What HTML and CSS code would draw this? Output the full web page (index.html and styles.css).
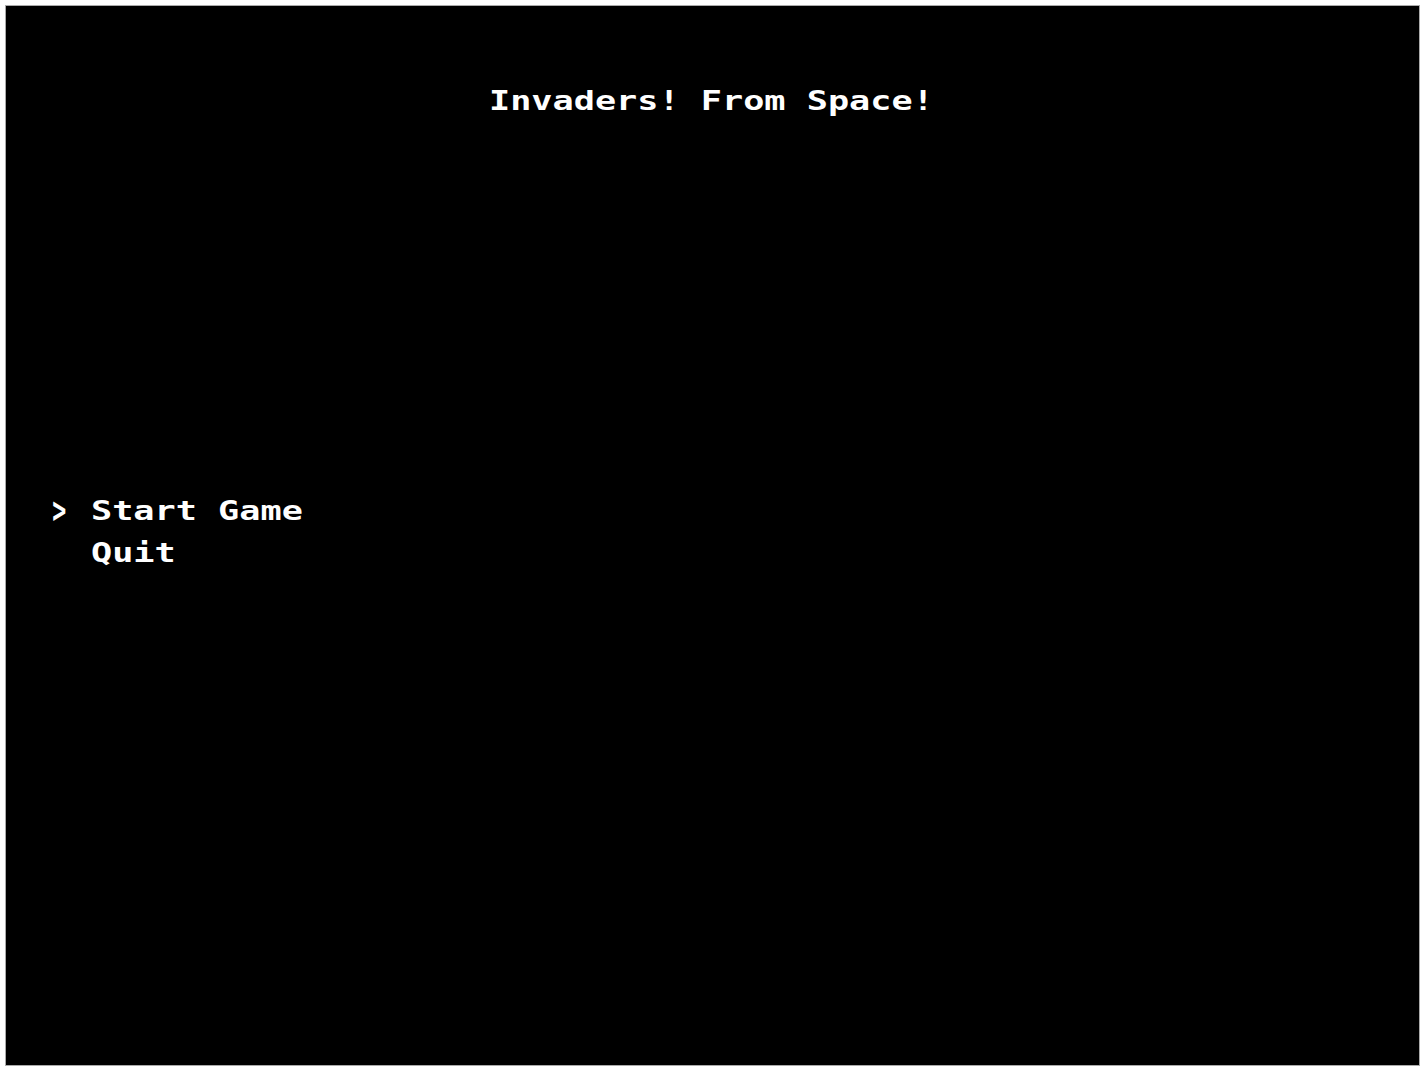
FILE: index.html
```html
<!DOCTYPE html>
<html lang="en">
<head>
<meta charset="utf-8">
<title>Invaders! From Space!</title>
<link rel="stylesheet" href="styles.css">
</head>
<body>
<main class="screen">
  <h1 class="title"><span class="wide">Invaders! From Space!</span></h1>
  <ul class="menu">
    <li class="item"><span class="cursor"><span class="arrow">&gt;</span></span><span class="wide">Start Game</span></li>
    <li class="item"><span class="cursor"></span><span class="wide">Quit</span></li>
  </ul>
</main>
</body>
</html>
```

FILE: styles.css
```css
* { box-sizing: border-box; }
body {
  margin: 0;
  padding: 5px;
  height: 1071px;
  background: #fff;
  overflow: hidden;
}
.screen {
  width: 1415px;
  height: 1061px;
  background: #000;
  border: 1px solid #aaa;
  color: #fff;
  font: bold 27px/42px "DejaVu Sans Mono", monospace;
  padding-top: 74px;
}
.title {
  margin: 0;
  padding-left: 483px;
  font: inherit;
}
/* Stretches the monospace cells to the wide arcade proportion. */
.wide {
  display: inline-block;
  transform: scaleX(1.303);
  transform-origin: left center;
  white-space: pre;
}
.menu {
  list-style: none;
  margin: 368px 0 0;
  padding: 0 0 0 43px;
}
.item { display: flex; height: 42px; }
.cursor { width: 42px; }
.arrow {
  display: inline-block;
  transform: translate(2px, 0) scale(0.86, 1.35);
}
```
